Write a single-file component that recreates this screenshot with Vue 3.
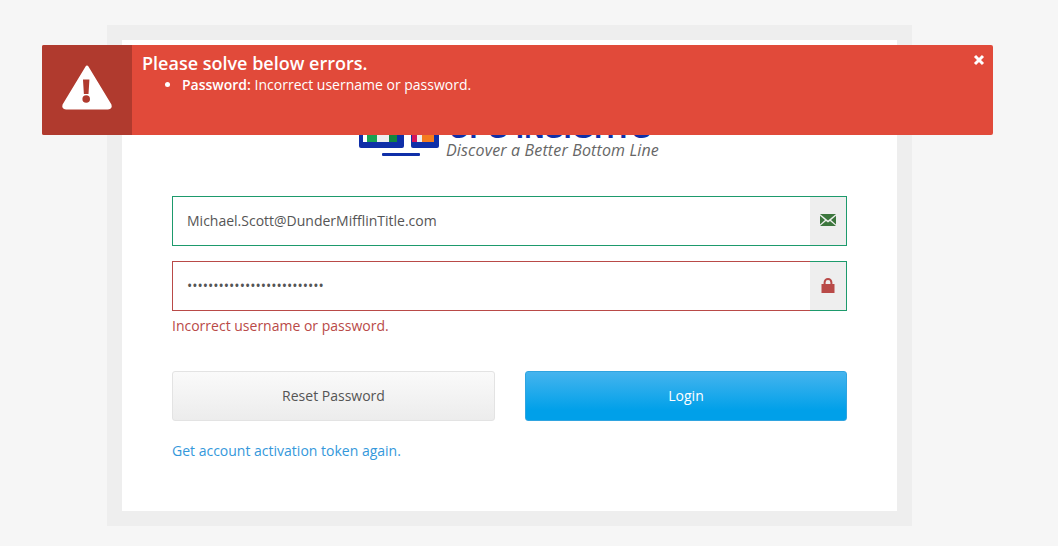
<script setup>
const email = 'Michael.Scott@DunderMifflinTitle.com'
const password = 'Michael.Scott1234567890123'
</script>

<template>
  <div class="page">
    <div class="card">
      <div class="logo">
        <svg class="logo-mark" width="86" height="68" viewBox="0 0 86 68">
          <rect x="0" y="30" width="45" height="28" rx="2" fill="#0f2fa8" />
          <rect x="4" y="34" width="4" height="18" fill="#fff" />
          <rect x="8" y="34" width="10" height="18" fill="#1aa252" />
          <rect x="18" y="34" width="12" height="18" fill="#eeeeee" />
          <rect x="30" y="34" width="8" height="18" fill="#12863f" />
          <rect x="52" y="30" width="28" height="28" rx="2" fill="#0f2fa8" />
          <rect x="53" y="34" width="5" height="18" fill="#d4145a" />
          <rect x="58" y="34" width="5" height="18" fill="#eeeeee" />
          <rect x="63" y="34" width="12" height="18" fill="#f47a1f" />
          <rect x="23" y="63" width="38" height="3" rx="1" fill="#0f2fa8" />
        </svg>
        <div class="logo-text">
          <span class="logo-name">UPS INSIGHTS</span>
          <span class="logo-tag">Discover a Better Bottom Line</span>
        </div>
      </div>

      <form class="form" @submit.prevent>
        <div class="field">
          <input class="input input-ok" type="text" :value="email" readonly />
          <span class="addon">
            <svg width="16" height="12" viewBox="0 0 16 12">
              <path d="M0 0h16L8 6.5z" fill="#3c763d" />
              <path d="M0 1.8 5 6 0 10.5zM16 1.8 11 6l5 4.5zM6 7l2 1.6L10 7l6 5H0z" fill="#3c763d" />
            </svg>
          </span>
        </div>
        <div class="field field-error">
          <input class="input input-bad" type="password" :value="password" readonly />
          <span class="addon">
            <svg width="14" height="15" viewBox="0 0 14 15">
              <path d="M0.5 6h13v9h-13z" fill="#b94a48" />
              <path d="M3.6 6.5V4.4a3.4 3.4 0 0 1 6.8 0v2.1" fill="none" stroke="#b94a48" stroke-width="2" />
            </svg>
          </span>
        </div>
        <p class="error-text">Incorrect username or password.</p>

        <div class="actions">
          <button class="btn btn-reset" type="button">Reset Password</button>
          <button class="btn btn-login" type="submit">Login</button>
        </div>
        <a class="token-link" href="#">Get account activation token again.</a>
      </form>
    </div>

    <!-- Error alert over the card -->
    <div class="alert">
      <div class="alert-icon">
        <svg width="52" height="46" viewBox="0 0 52 46">
          <path d="M26 3 L49 41 Q50 44 47 44 L5 44 Q2 44 3 41 Z" fill="#fff" stroke="#fff" stroke-width="3" stroke-linejoin="round" />
          <path d="M22 15.5h6.4l-.9 14.5h-4.6z" fill="#b03a2e" />
          <circle cx="25.2" cy="35" r="3.8" fill="#b03a2e" />
        </svg>
      </div>
      <div class="alert-body">
        <div class="alert-title">Please solve below errors.</div>
        <ul class="alert-list">
          <li><strong>Password:</strong> Incorrect username or password.</li>
        </ul>
      </div>
      <svg class="alert-close" width="12" height="12" viewBox="0 0 12 12">
        <path d="M2 2l8 8M10 2l-8 8" stroke="#fff" stroke-width="3" />
      </svg>
    </div>
  </div>
</template>

<style>
html, body {
  margin: 0;
  background: #f6f6f6;
}
</style>

<style scoped>
.page {
  position: relative;
  height: 546px;
  overflow: hidden;
  padding: 25px 0 0 107px;
  box-sizing: border-box;
  font-family: "Open Sans", sans-serif;
  font-size: 14px;
  color: #555;
}

.card {
  width: 805px;
  height: 501px;
  box-sizing: border-box;
  border: 15px solid #eeeeee;
  background: #fff;
  padding: 50px 50px 0;
}

/* Logo, mostly hidden by the alert */
.logo {
  display: flex;
  justify-content: center;
  height: 68px;
  margin-bottom: 38px;
}

.logo-mark {
  flex: none;
}

.logo-text {
  width: 214px;
  display: flex;
  flex-direction: column;
  padding-top: 28px;
  margin-left: 1px;
}

.logo-name {
  height: 22px;
  line-height: 22px;
  font-family: "Liberation Sans", sans-serif;
  font-size: 28px;
  font-weight: 700;
  color: #0f2fa8;
  letter-spacing: 0.4px;
  white-space: nowrap;
  margin-left: 3px;
}

.logo-tag {
  font-size: 16px;
  font-style: italic;
  line-height: 20px;
  color: #666;
  letter-spacing: 0.15px;
  white-space: nowrap;
}

.form {
  display: flex;
  flex-direction: column;
}

.field {
  display: flex;
  height: 50px;
  margin-bottom: 15px;
}

.field-error {
  margin-bottom: 5px;
}

.input {
  flex: 1;
  min-width: 0;
  box-sizing: border-box;
  height: 50px;
  padding: 0 14px 2px;
  border-width: 1px;
  border-style: solid;
  border-right: none;
  outline: none;
  background: #fff;
  font-family: "Open Sans", sans-serif;
  font-size: 14px;
  color: #555;
}

.input-ok {
  border-color: #1d9a6c;
}

.input-bad {
  border-color: #b94a48;
}

.addon {
  width: 37px;
  box-sizing: border-box;
  display: flex;
  align-items: center;
  justify-content: center;
  padding-bottom: 2px;
  background: #eeeeee;
  border: 1px solid #1d9a6c;
  border-left: none;
}

.error-text {
  margin: 0;
  height: 20px;
  line-height: 19px;
  color: #b94a48;
}

.actions {
  display: flex;
  justify-content: space-between;
  margin-top: 35px;
}

.btn {
  width: 323px;
  height: 50px;
  box-sizing: border-box;
  border-radius: 3px;
  padding: 0 0 2px;
  font-family: "Open Sans", sans-serif;
  font-size: 14px;
  cursor: pointer;
}

.btn-reset {
  border: 1px solid #e3e3e3;
  background: linear-gradient(#fafafa, #ececec);
  color: #555;
}

.btn-login {
  width: 322px;
  border: 1px solid #2fa4e0;
  background: linear-gradient(#45b4ee, #00a0e9 80%);
  color: #fff;
}

.token-link {
  margin-top: 20px;
  line-height: 19px;
  color: #3498db;
  text-decoration: none;
}

/* Alert */
.alert {
  position: absolute;
  top: 45px;
  left: 42px;
  width: 951px;
  height: 90px;
  display: flex;
  background: #e14a3a;
  border-radius: 2px;
  color: #fff;
  overflow: hidden;
}

.alert-icon {
  width: 90px;
  flex: none;
  display: flex;
  align-items: center;
  justify-content: center;
  padding-bottom: 6px;
  box-sizing: border-box;
  background: #b03a2e;
}

.alert-body {
  padding: 6px 10px;
}

.alert-title {
  font-size: 18px;
  font-weight: 600;
  line-height: 24px;
}

.alert-list {
  margin: 0;
  padding-left: 40px;
  line-height: 20px;
}

.alert-list strong {
  font-weight: 600;
}

.alert-close {
  position: absolute;
  top: 9px;
  right: 8px;
}
</style>
